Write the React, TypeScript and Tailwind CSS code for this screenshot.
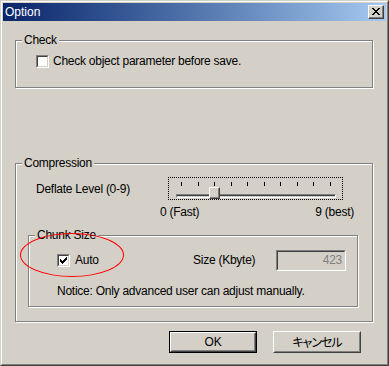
import React from 'react';

const FONT = "font-['Liberation_Sans','Noto_Sans_CJK_JP',sans-serif]";

// sunken 13x13 checkbox in the classic style
const CheckBox = ({ checked }: { checked?: boolean }) => (
  <span className="block w-[13px] h-[13px] shrink-0 border border-t-[#808080] border-l-[#808080] border-b-white border-r-white">
    <span className="flex items-center justify-center w-full h-full border border-t-[#404040] border-l-[#404040] border-b-[#d4d0c8] border-r-[#d4d0c8] bg-white">
      {checked && (
        <svg width="7" height="7" viewBox="0 0 7 7" shapeRendering="crispEdges">
          <rect x="0" y="2" width="1" height="3" fill="#000" />
          <rect x="1" y="3" width="1" height="3" fill="#000" />
          <rect x="2" y="4" width="1" height="3" fill="#000" />
          <rect x="3" y="3" width="1" height="3" fill="#000" />
          <rect x="4" y="2" width="1" height="3" fill="#000" />
          <rect x="5" y="1" width="1" height="3" fill="#000" />
          <rect x="6" y="0" width="1" height="3" fill="#000" />
        </svg>
      )}
    </span>
  </span>
);

const GroupBox = ({
  label,
  className,
  children,
}: {
  label: string;
  className: string;
  children: React.ReactNode;
}) => (
  <div
    className={`relative border border-[#808080] shadow-[inset_1px_1px_0_#fff,1px_1px_0_#fff] ${className}`}
  >
    <span className="absolute left-[6px] -top-[8px] px-[2px] bg-[#d4d0c8] leading-[14px]">{label}</span>
    {children}
  </div>
);

const Button = ({ children, isDefault }: { children: React.ReactNode; isDefault?: boolean }) => {
  const face = (
    <div className="w-full h-full border border-t-white border-l-white border-b-[#404040] border-r-[#404040]">
      <div className="w-full h-full flex items-center justify-center border border-t-[#d4d0c8] border-l-[#d4d0c8] border-b-[#808080] border-r-[#808080]">
        {children}
      </div>
    </div>
  );
  return (
    <button className={`w-[88px] h-[22px] ${isDefault ? 'border border-black' : ''}`}>{face}</button>
  );
};

const Slider = () => {
  const ticks = Array.from({ length: 10 }, (_, i) => i);
  return (
    <div className="relative w-[175px] h-[23px] border border-dotted border-black">
      <div className="ml-[12px] mt-[4px] w-[150px] h-[4px] flex justify-between">
        {ticks.map((t) => (
          <span key={t} className="block w-px h-[4px] bg-black" />
        ))}
      </div>
      <div className="ml-[7px] mt-[8px] w-[160px] h-[4px] border border-t-[#808080] border-l-[#808080] border-b-white border-r-white">
        <div className="w-full h-full border-t border-t-[#404040]" />
      </div>
      {/* thumb sits over the channel */}
      <div className="absolute left-[40px] top-[9px] w-[11px] h-[12px] border border-t-white border-l-white border-b-[#404040] border-r-[#404040] bg-[#d4d0c8]">
        <div className="w-full h-full border-b border-r border-b-[#808080] border-r-[#808080]" />
      </div>
    </div>
  );
};

export default function App() {
  return (
    <div
      className={`relative w-[389px] h-[366px] bg-[#d4d0c8] text-[12px] tracking-[-0.25px] text-black border border-t-[#d4d0c8] border-l-[#d4d0c8] border-b-[#404040] border-r-[#404040] ${FONT}`}
    >
      <div className="w-full h-full p-px border border-t-white border-l-white border-b-[#808080] border-r-[#808080] flex flex-col">
        {/* title bar */}
        <div className="h-[18px] shrink-0 flex items-center justify-between pl-[2px] pr-[2px] bg-gradient-to-r from-[#0a246a] to-[#a6caf0]">
          <span className="text-white leading-[14px] tracking-normal">Option</span>
          <div className="w-[16px] h-[14px] border border-t-white border-l-white border-b-[#404040] border-r-[#404040] bg-[#d4d0c8]">
            <div className="w-full h-full flex items-center justify-center border-b border-r border-b-[#808080] border-r-[#808080]">
              <svg width="8" height="7" viewBox="0 0 8 7" shapeRendering="crispEdges">
                <path d="M0 0h2v1h-2zM6 0h2v1h-2zM1 1h2v1h-2zM5 1h2v1h-2zM2 2h4v1h-4zM3 3h2v1h-2zM2 4h4v1h-4zM1 5h2v1h-2zM5 5h2v1h-2zM0 6h2v1h-2zM6 6h2v1h-2z" fill="#000" />
              </svg>
            </div>
          </div>
        </div>

        {/* Check */}
        <GroupBox label="Check" className="ml-[12px] mt-[19px] w-[358px] h-[48px]">
          <div className="pl-[20px] pt-[14px] flex items-center gap-[4px]">
            <CheckBox />
            <span className="leading-[13px]">Check object parameter before save.</span>
          </div>
        </GroupBox>

        {/* Compression */}
        <GroupBox label="Compression" className="ml-[12px] mt-[75px] w-[358px] h-[159px]">
          <div className="pt-[13px] pl-[20px] flex items-center">
            <span className="w-[132px]">Deflate Level (0-9)</span>
            <Slider />
          </div>
          <div className="ml-[144px] w-[194px] h-[24px] flex items-center justify-between">
            <span>0 (Fast)</span>
            <span>9 (best)</span>
          </div>

          <GroupBox label="Chunk Size" className="ml-[12px] mt-[11px] w-[330px] h-[72px]">
            <div className="pt-[13px] pl-[28px] flex items-center h-[35px]">
              <div className="w-[136px] flex items-center gap-[5px]">
                <CheckBox checked />
                <span>Auto</span>
              </div>
              <span className="w-[83px]">Size (Kbyte)</span>
              <div className="w-[70px] h-[21px] border border-t-[#808080] border-l-[#808080] border-b-white border-r-white">
                <div className="w-full h-full flex items-center justify-end pr-[2px] text-[#808080] border border-t-[#404040] border-l-[#404040] border-b-[#d4d0c8] border-r-[#d4d0c8]">
                  423
                </div>
              </div>
            </div>
            <div className="pl-[28px] mt-[13px] leading-[14px]">
              Notice: Only advanced user can adjust manually.
            </div>
          </GroupBox>
        </GroupBox>

        {/* buttons */}
        <div className="mt-[9px] pl-[166px] flex gap-[16px]">
          <Button isDefault>OK</Button>
          <Button>
            <span className="font-['Noto_Sans_CJK_JP',sans-serif] [font-feature-settings:'palt'] tracking-[-1px]">キャンセル</span>
          </Button>
        </div>
      </div>

      {/* red annotation ellipse drawn over the dialog */}
      <div className="absolute left-[19px] top-[232px] w-[104px] h-[44px] rounded-[50%] border border-[#ff0000]" />
    </div>
  );
}
